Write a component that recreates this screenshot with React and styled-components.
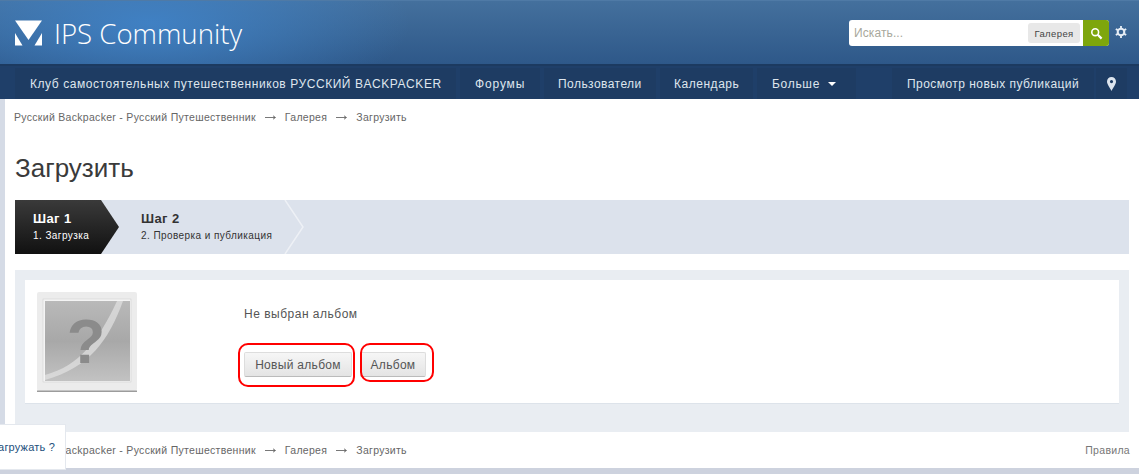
import React from "react";
import styled, { createGlobalStyle } from "styled-components";

const GlobalStyle = createGlobalStyle`
  html, body {
    margin: 0;
    padding: 0;
    height: 474px;
    overflow: hidden;
    background: #d5dbe6;
  }
  body {
    font-family: "Liberation Sans", Arial, sans-serif;
    font-size: 12px;
    color: #555;
  }
`;

const Page = styled.div`
  position: relative;
  width: 1139px;
  height: 474px;
  overflow: hidden;
`;

const TopBar = styled.header`
  display: flex;
  align-items: flex-start;
  justify-content: space-between;
  height: 64px;
  box-sizing: border-box;
  border-top: 1px solid #4f7aa6;
  background:
    radial-gradient(ellipse 260px 90px at 150px 22px, rgba(64, 130, 198, 0.95), rgba(64, 130, 198, 0) 100%),
    linear-gradient(to bottom, #44709d, #2e5889);
`;

const Brand = styled.div`
  display: flex;
  align-items: center;
  gap: 12px;
  padding: 17px 0 0 15px;
`;

const BrandName = styled.span`
  font-family: "Open Sans", sans-serif;
  font-weight: 300;
  font-size: 27.6px;
  line-height: 30px;
  color: #fff;
`;

const SearchArea = styled.div`
  display: flex;
  align-items: flex-start;
  gap: 6px;
  padding: 19px 12px 0 0;
`;

const SearchBox = styled.div`
  display: flex;
  align-items: center;
  justify-content: space-between;
  width: 260px;
  height: 26px;
  background: #fff;
  border-radius: 3px;
  overflow: hidden;
`;

const Placeholder = styled.span`
  padding-left: 5px;
  font-size: 12px;
  letter-spacing: 0.1px;
  color: #a8a89c;
`;

const SearchRight = styled.div`
  display: flex;
  align-items: center;
  gap: 3px;
`;

const Scope = styled.span`
  display: flex;
  align-items: center;
  justify-content: center;
  width: 52px;
  height: 20px;
  background: #e8e8e8;
  border-radius: 3px;
  font-size: 9.5px;
  letter-spacing: 0.4px;
  color: #444;
`;

const SearchButton = styled.span`
  display: flex;
  align-items: center;
  justify-content: center;
  width: 26px;
  height: 26px;
  background: #7ea60c;
`;

const GearSlot = styled.span`
  display: block;
  margin-top: 6px;
  line-height: 0;
`;

const NavBar = styled.nav`
  display: flex;
  justify-content: space-between;
  height: 35px;
  box-sizing: border-box;
  padding: 4px 12px 0 15px;
  border-top: 2px solid #1c3a60;
  background: #1f3f69;
`;

const NavGroup = styled.div`
  display: flex;
  gap: ${(p) => p.$gap}px;
`;

const NavItem = styled.a`
  display: flex;
  align-items: center;
  gap: 8px;
  box-sizing: border-box;
  width: ${(p) => p.$width}px;
  padding-left: ${(p) => p.$pad}px;
  margin-top: -2px;
  background: #1e3c63;
  color: #dfe6ee;
  font-size: 12px;
  letter-spacing: ${(p) => p.$track ?? 0.45}px;
`;

const Caret = styled.span`
  width: 0;
  height: 0;
  border-left: 4px solid transparent;
  border-right: 4px solid transparent;
  border-top: 4px solid #fff;
`;

const Sheet = styled.main`
  margin-left: 5px;
  height: 369px;
  background: #fff;
  padding: 0 10px;
  box-sizing: border-box;
`;

const Crumbs = styled.div`
  display: flex;
  align-items: center;
  justify-content: space-between;
  height: 36px;
  margin-left: -1px;
  font-size: 10.5px;
  letter-spacing: 0.3px;
  color: #666;
`;

const CrumbTrail = styled.div`
  display: flex;
  align-items: center;
  gap: 9px;
`;

const Arrow = styled.svg`
  display: block;
  width: 11px;
  height: 5px;
`;

const RulesLink = styled.span`
  color: #777;
  margin-right: -1px;
`;

const Title = styled.h1`
  margin: 0;
  padding-top: 18px;
  height: 47px;
  font-size: 26px;
  line-height: 30px;
  font-weight: 400;
  color: #3a3a3a;
  box-sizing: content-box;
`;

const Steps = styled.div`
  display: flex;
  height: 54px;
  background: #dce2ec;
`;

const ActiveStep = styled.div`
  display: flex;
  flex-direction: column;
  justify-content: center;
  gap: 4px;
  width: 104px;
  box-sizing: border-box;
  padding: 0 0 2px 18px;
  color: #fff;
  background: linear-gradient(to bottom, #3a3a3a, #111);
  clip-path: polygon(0 0, 86px 0, 100% 50%, 86px 100%, 0 100%);
`;

const PlainStep = styled.div`
  display: flex;
  flex-direction: column;
  justify-content: center;
  gap: 4px;
  margin-left: 22px;
  padding-bottom: 2px;
  width: 143px;
  color: #333;
`;

const StepTitle = styled.strong`
  font-size: 13px;
  line-height: 15px;
  letter-spacing: 0.4px;
`;

const StepNote = styled.span`
  font-size: 10px;
  line-height: 12px;
  letter-spacing: 0.42px;
`;

const StepDivider = styled.svg`
  display: block;
  width: 20px;
  height: 54px;
`;

const Panel = styled.section`
  margin-top: 16px;
  height: 162px;
  box-sizing: border-box;
  padding: 10px;
  background: #e9edf2;
`;

const PanelInner = styled.div`
  display: flex;
  height: 124px;
  box-sizing: border-box;
  padding: 12px;
  background: #fff;
  border-bottom: 1px solid #dde3ea;
`;

const Thumb = styled.svg`
  display: block;
  flex: none;
  width: 100px;
  height: 100px;
`;

const AlbumInfo = styled.div`
  margin-left: 107px;
`;

const NoAlbum = styled.p`
  margin: 15px 0 0;
  font-size: 12px;
  line-height: 14px;
  letter-spacing: 0.5px;
  color: #555;
`;

const ButtonRow = styled.div`
  display: flex;
  gap: 8px;
  margin-top: 31px;
`;

const Button = styled.button`
  position: relative;
  height: 25px;
  width: ${(p) => p.$width}px;
  padding: 0;
  border: 1px solid #ddd;
  border-bottom-color: #bbb;
  border-radius: 2px;
  background: linear-gradient(to bottom, #f6f6f6, #e4e4e4);
  font-family: "Liberation Sans", Arial, sans-serif;
  font-size: 12px;
  letter-spacing: 0.3px;
  color: #555;

  &::after {
    content: "";
    position: absolute;
    top: ${(p) => p.$ring[0]}px;
    right: ${(p) => p.$ring[1]}px;
    bottom: ${(p) => p.$ring[2]}px;
    left: ${(p) => p.$ring[3]}px;
    border: 2px solid #f00;
    border-radius: 10px;
  }
`;

const Bubble = styled.div`
  position: absolute;
  left: -4px;
  top: 424px;
  display: flex;
  align-items: center;
  justify-content: flex-end;
  width: 70px;
  height: 46px;
  box-sizing: border-box;
  padding-right: 10px;
  background: #fff;
  border: 1px solid #e4e8ee;
  font-size: 11px;
  letter-spacing: 0.2px;
  color: #1d4f7c;
  white-space: nowrap;
`;

const SheetEnd = styled.div`
  position: absolute;
  left: 0;
  right: 0;
  top: 468px;
  height: 6px;
  background: #cdd2de;
`;

const Logo = () => (
  <svg width="27" height="26" viewBox="0 0 27 26">
    <path fill="#fff" d="M0 0.5H27L13.5 20Z" />
    <path fill="#fff" d="M0 13L7.5 25.5H0Z" />
    <path fill="#fff" d="M27 13L19.5 25.5H27Z" />
  </svg>
);

const SearchIcon = () => (
  <svg width="13" height="13" viewBox="0 0 13 13" fill="none" stroke="#fff">
    <circle cx="5.2" cy="5.2" r="3.4" strokeWidth="1.6" />
    <path d="M7.8 7.8L11.6 11.6" strokeWidth="2.2" />
  </svg>
);

const Gear = () => (
  <svg width="12" height="12" viewBox="0 0 13 13">
    <circle cx="6.5" cy="6.5" r="3.6" fill="none" stroke="#e6edf5" strokeWidth="2.2" />
    <path
      stroke="#e6edf5"
      strokeWidth="2"
      d="M6.5 0V2.5M6.5 10.5V13M0.9 3.2L3 4.5M10 8.5L12.1 9.8M0.9 9.8L3 8.5M10 4.5L12.1 3.2"
    />
  </svg>
);

const Pin = () => (
  <svg width="9" height="14" viewBox="0 0 9 14">
    <path
      fill="#dde5ee"
      fillRule="evenodd"
      d="M4.5 0C2 0 0 2 0 4.5C0 7.5 3.2 11 4.5 14C5.8 11 9 7.5 9 4.5C9 2 7 0 4.5 0ZM4.5 3A1.6 1.6 0 1 1 4.5 6.2A1.6 1.6 0 1 1 4.5 3Z"
    />
  </svg>
);

const CrumbArrow = () => (
  <Arrow viewBox="0 0 11 5">
    <path d="M0 2.5H10M8 0.8L10.5 2.5L8 4.2" fill="none" stroke="#555" strokeWidth="0.8" />
  </Arrow>
);

const UnknownAlbum = () => (
  <Thumb viewBox="0 0 100 100">
    <defs>
      <linearGradient id="face" x1="0" y1="0" x2="0" y2="1">
        <stop offset="0" stopColor="#b9b9b9" />
        <stop offset="0.5" stopColor="#a8a8a8" />
        <stop offset="1" stopColor="#c2c2c2" />
      </linearGradient>
    </defs>
    <rect x="0" y="0" width="100" height="99" rx="2" fill="#ececec" />
    <rect x="0" y="98.5" width="100" height="1.5" fill="#9c9c9c" />
    <rect x="6" y="7" width="88" height="83" fill="#f4f4f4" stroke="#c9c9c9" strokeWidth="0.5" />
    <rect x="8" y="9" width="85" height="80" fill="url(#face)" />
    <path d="M8 83C42 74 62 48 80 9H86C72 48 52 76 8 88Z" fill="#e2e2e2" opacity="0.7" />
    <text x="49" y="71" textAnchor="middle" fontFamily="Liberation Sans" fontWeight="700" fontSize="63" fill="#8b8b8b">
      ?
    </text>
  </Thumb>
);

const Trail = () => (
  <CrumbTrail>
    <span>Русский Backpacker - Русский Путешественник</span>
    <CrumbArrow />
    <span>Галерея</span>
    <CrumbArrow />
    <span>Загрузить</span>
  </CrumbTrail>
);

export default function App() {
  return (
    <Page>
      <GlobalStyle />
      <TopBar>
        <Brand>
          <Logo />
          <BrandName>IPS Community</BrandName>
        </Brand>
        <SearchArea>
          <SearchBox>
            <Placeholder>Искать...</Placeholder>
            <SearchRight>
              <Scope>Галерея</Scope>
              <SearchButton>
                <SearchIcon />
              </SearchButton>
            </SearchRight>
          </SearchBox>
          <GearSlot>
            <Gear />
          </GearSlot>
        </SearchArea>
      </TopBar>
      <NavBar>
        <NavGroup $gap={4}>
          <NavItem $width={441} $pad={15} $track={0.56}>
            Клуб самостоятельных путешественников РУССКИЙ BACKPACKER
          </NavItem>
          <NavItem $width={80} $pad={15} $track={0.85}>Форумы</NavItem>
          <NavItem $width={112} $pad={14}>Пользователи</NavItem>
          <NavItem $width={93} $pad={14} $track={0.53}>Календарь</NavItem>
          <NavItem $width={99} $pad={15} $track={0.7}>
            Больше <Caret />
          </NavItem>
        </NavGroup>
        <NavGroup $gap={2}>
          <NavItem $width={202} $pad={15}>Просмотр новых публикаций</NavItem>
          <NavItem $width={31} $pad={11}>
            <Pin />
          </NavItem>
        </NavGroup>
      </NavBar>
      <Sheet>
        <Crumbs>
          <Trail />
        </Crumbs>
        <Title>Загрузить</Title>
        <Steps>
          <ActiveStep>
            <StepTitle>Шаг 1</StepTitle>
            <StepNote>1. Загрузка</StepNote>
          </ActiveStep>
          <PlainStep>
            <StepTitle>Шаг 2</StepTitle>
            <StepNote>2. Проверка и публикация</StepNote>
          </PlainStep>
          <StepDivider viewBox="0 0 20 54">
            <path d="M1 0L19 27L1 54" fill="none" stroke="#eef1f6" strokeWidth="1.5" />
          </StepDivider>
        </Steps>
        <Panel>
          <PanelInner>
            <UnknownAlbum />
            <AlbumInfo>
              <NoAlbum>Не выбран альбом</NoAlbum>
              <ButtonRow>
                <Button $width={108} $ring={[-10, -4, -11, -7]}>Новый альбом</Button>
                <Button $width={66} $ring={[-10, -9, -6, -1]}>Альбом</Button>
              </ButtonRow>
            </AlbumInfo>
          </PanelInner>
        </Panel>
        <Crumbs>
          <Trail />
          <RulesLink>Правила</RulesLink>
        </Crumbs>
      </Sheet>
      <SheetEnd />
      <Bubble>загружать ?</Bubble>
    </Page>
  );
}
